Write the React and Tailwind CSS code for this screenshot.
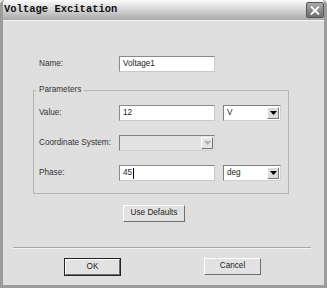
const font = { fontFamily: '"Liberation Sans", Arial, sans-serif' };

function Field({ value, caret }) {
  return (
    <div className="flex h-[16px] w-[96px] items-center border border-t-[#8a8a8a] border-l-[#8a8a8a] border-r-[#c8c8c8] border-b-[#c8c8c8] bg-white pl-[3px] text-[8.2px] text-[#222]">
      {value}
      {caret && <span className="ml-px h-[11px] w-px bg-black" />}
    </div>
  );
}

function Arrow({ disabled }) {
  return (
    <div
      className={`flex h-full w-[12px] items-center justify-center border border-t-white border-l-white border-r-[#777] border-b-[#777] ${
        disabled ? 'bg-[#e4e4e4]' : 'bg-[#dcdcdc]'
      }`}
    >
      <svg width="7" height="4" viewBox="0 0 7 4">
        <path d="M0 0h7L3.5 4z" fill={disabled ? '#b0b0b0' : '#000'} />
      </svg>
    </div>
  );
}

function Select({ value, disabled, width = 'w-[58px]' }) {
  return (
    <div
      className={`flex h-[16px] ${width} items-stretch border border-t-[#808080] border-l-[#808080] border-r-[#d0d0d0] border-b-[#d0d0d0] p-px ${
        disabled ? 'bg-[#e2e2e2]' : 'bg-white'
      }`}
    >
      <div className="flex flex-1 items-center pl-[2px] text-[8.2px] text-[#222]">{value}</div>
      <Arrow disabled={disabled} />
    </div>
  );
}

function Button({ children, width, primary }) {
  return (
    <div className={primary ? 'border border-[#222]' : ''}>
      <div
        className={`flex ${width} ${primary ? 'h-[16px]' : 'h-[17px]'} items-center justify-center border border-t-white border-l-white border-r-[#6e6e6e] border-b-[#6e6e6e] bg-[#e2e2e2] text-[8.2px] text-[#222]`}
      >
        {children}
      </div>
    </div>
  );
}

function Row({ label, children }) {
  return (
    <div className="flex items-center">
      <span className="w-[80px] text-[8.2px] text-[#333]">{label}</span>
      {children}
    </div>
  );
}

export default function App() {
  return (
    <div className="h-[288px] w-[327px] bg-[#ececec]" style={font}>
      <div className="flex h-full flex-col overflow-hidden rounded-t-[5px] border-x-[3px] border-b-[3px] border-[#9c9c9c]">
        {/* Title bar */}
        <div className="flex h-[21px] shrink-0 items-center justify-between border-b border-[#f2f2f2] bg-gradient-to-b from-[#fbfbfb] via-[#d4d4d4] to-[#a9a9a9] pl-[1px] pr-[0px]">
          <span
            className="text-[10.5px] font-bold text-[#111]"
            style={{ fontFamily: '"Liberation Mono", "Courier New", monospace' }}
          >
            Voltage Excitation
          </span>
          <div className="flex h-[16px] w-[18px] items-center justify-center rounded-[2px] border border-[#555] bg-gradient-to-b from-[#a8a8a8] to-[#707070]">
            <svg width="10" height="9" viewBox="0 0 10 9">
              <path d="M1 0.5l8 8M9 0.5l-8 8" stroke="#fff" strokeWidth="1.8" />
            </svg>
          </div>
        </div>

        {/* Body */}
        <div className="flex flex-1 flex-col bg-[#dfdfdf] pt-[35px]">
          <div className="pl-[36px]">
            <Row label="Name:">
              <Field value="Voltage1" />
            </Row>
          </div>

          <div className="relative ml-[30px] mt-[18px] h-[104px] w-[256px] border border-[#b4b4b4] px-[5px] pt-[14px]">
            <span className="absolute -top-[6px] left-[2px] bg-[#dfdfdf] px-[3px] text-[8.2px] leading-[10px] text-[#333]">
              Parameters
            </span>
            <div className="flex flex-col gap-[14px]">
              <Row label="Value:">
                <Field value="12" />
                <div className="ml-[8px]">
                  <Select value="V" />
                </div>
              </Row>
              <Row label="Coordinate System:">
                <Select value="" disabled width="w-[96px]" />
              </Row>
              <Row label="Phase:">
                <Field value="45" caret />
                <div className="ml-[8px]">
                  <Select value="deg" />
                </div>
              </Row>
            </div>
          </div>

          <div className="ml-[120px] mt-[11px]">
            <Button width="w-[62px]">Use Defaults</Button>
          </div>

          <div className="ml-[10px] mt-[25px] w-[298px] border-t border-b border-t-[#a8a8a8] border-b-[#f4f4f4]" />

          <div className="mt-[9px] flex">
            <div className="ml-[61px]">
              <Button width="w-[55px]" primary>
                OK
              </Button>
            </div>
            <div className="ml-[83px]">
              <Button width="w-[57px]">Cancel</Button>
            </div>
          </div>
        </div>
      </div>
    </div>
  );
}
